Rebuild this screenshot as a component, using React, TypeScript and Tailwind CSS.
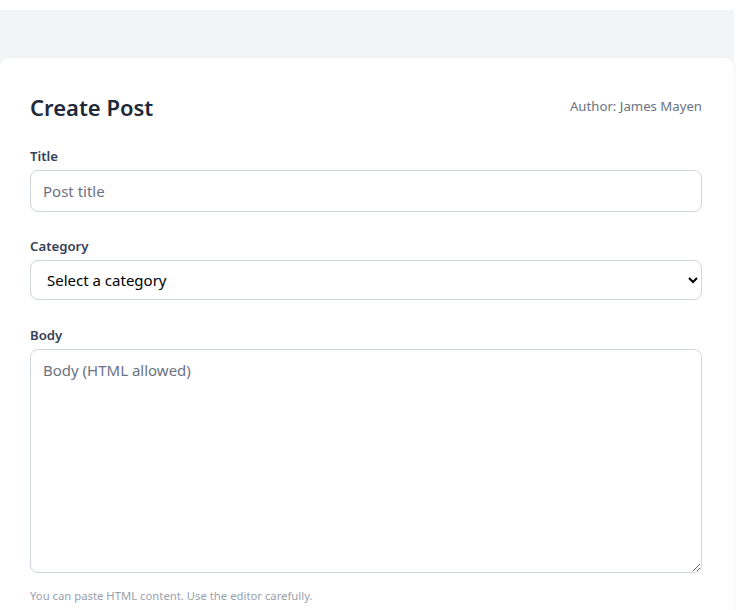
export default function App() {
  return (
    <div className="min-h-[610px] bg-white pt-[10px]" style={{ fontFamily: '"Noto Sans", "Open Sans", sans-serif' }}>
      <div className="w-[734px] bg-gray-100 pt-12">
        <div className="rounded-t-lg bg-white pt-[30px] pr-[32px] pb-6 pl-[30px] shadow-sm">
          <div className="mb-5 flex items-center justify-between">
            <h1 className="text-[22px] leading-[38px] font-semibold text-gray-800">Create Post</h1>
            <span className="text-[13.2px] text-gray-500">Author: James Mayen</span>
          </div>
          <div className="mb-6">
            <label className="mb-1 block text-[13.2px] leading-5 font-semibold text-gray-700">Title</label>
            <input
              type="text"
              placeholder="Post title"
              className="block h-[42px] w-full rounded-lg border border-gray-300 px-3 text-[15px] text-gray-900 placeholder:text-gray-500 outline-none"
            />
          </div>
          <div className="mb-[25px]">
            <label className="mb-1 block text-[13.2px] leading-5 font-semibold text-gray-700">Category</label>
            <select className="block h-10 w-full rounded-lg border border-gray-300 bg-white px-3 text-[15px] text-black outline-none">
              <option>Select a category</option>
            </select>
          </div>
          <div>
            <label className="mb-1 block text-[13.2px] leading-5 font-semibold text-gray-700">Body</label>
            <textarea
              placeholder="Body (HTML allowed)"
              className="block h-[224px] w-full rounded-lg border border-gray-300 px-3 py-2 text-[15px] leading-6 text-gray-900 placeholder:text-gray-500 outline-none"
            />
            <p className="mt-[15px] text-[11.3px] leading-4 text-gray-400">You can paste HTML content. Use the editor carefully.</p>
          </div>
        </div>
      </div>
    </div>
  );
}
